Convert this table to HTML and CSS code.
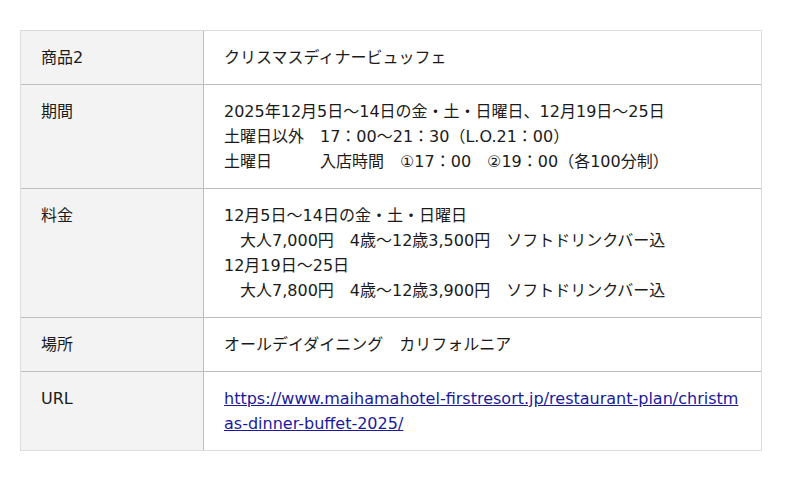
FILE: index.html
```html
<!DOCTYPE html>
<html lang="ja">
<head>
<meta charset="utf-8">
<link rel="stylesheet" href="styles.css">
</head>
<body>
<table class="info">
  <tbody>
    <tr>
      <th>商品2</th>
      <td>クリスマスディナービュッフェ</td>
    </tr>
    <tr>
      <th>期間</th>
      <td>2025年12月5日～14日の金・土・日曜日、12月19日～25日<br>土曜日以外　17：00～21：30（L.O.21：00）<br>土曜日　　　入店時間　①17：00　②19：00（各100分制）</td>
    </tr>
    <tr>
      <th>料金</th>
      <td>12月5日～14日の金・土・日曜日<br>　大人7,000円　4歳～12歳3,500円　ソフトドリンクバー込<br>12月19日～25日<br>　大人7,800円　4歳～12歳3,900円　ソフトドリンクバー込</td>
    </tr>
    <tr>
      <th>場所</th>
      <td>オールデイダイニング　カリフォルニア</td>
    </tr>
    <tr>
      <th>URL</th>
      <td><a class="link" href="#">https://www.maihamahotel-firstresort.jp/restaurant-plan/christmas-dinner-buffet-2025/</a></td>
    </tr>
  </tbody>
</table>
</body>
</html>
```
FILE: styles.css
```css
html, body {
  margin: 0;
  padding: 0;
  background: #fff;
}
body {
  padding: 30px 20px;
  font-family: "DejaVu Sans", "Noto Sans CJK JP", sans-serif;
  font-size: 16px;
  line-height: 25px;
  color: #1a1a1a;
}
.info {
  width: 742px;
  border-collapse: separate;
  border-spacing: 0;
  border: 1px solid #dcdcdc;
  table-layout: fixed;
}
.info th,
.info td {
  padding: 14px 20px;
  text-align: left;
  vertical-align: top;
  font-weight: normal;
  border-bottom: 1px solid #bdbdbd;
}
.info tr:last-child th,
.info tr:last-child td {
  border-bottom: none;
}
.info th {
  box-sizing: border-box;
  width: 183px;
  background: #f3f3f3;
  border-right: 1px solid #bdbdbd;
}
.info td {
  word-break: break-all;
  overflow-wrap: anywhere;
}
.link {
  color: #1a1a9c;
  text-decoration: underline;
}
```
